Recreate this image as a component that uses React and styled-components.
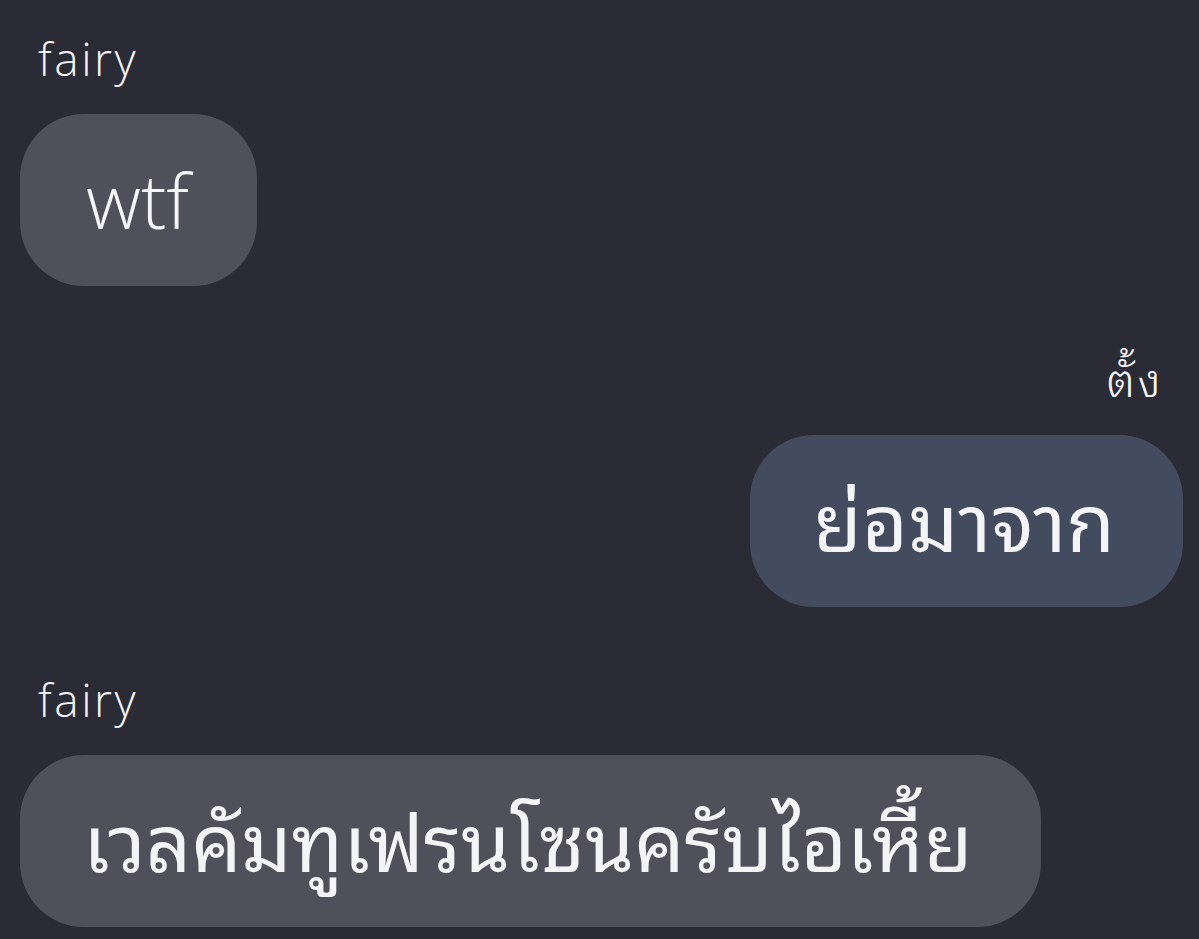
import React from "react"
import styled, { createGlobalStyle } from "styled-components"

const GlobalStyle = createGlobalStyle`
  html, body {
    margin: 0;
    padding: 0;
    background: #2a2b35;
  }
  body {
    font-family: "Open Sans", "Noto Sans Thai Looped", "Loma", "Garuda", "Kinnari", "Waree", "Noto Sans Thai", "Noto Sans", sans-serif;
    color: #f4f4f6;
  }
`

const Chat = styled.main`
  width: 1199px;
  height: 939px;
  overflow: hidden;
  box-sizing: border-box;
  padding: 28px 16px 0 20px;
  display: flex;
  flex-direction: column;
`

const Group = styled.section`
  display: flex;
  flex-direction: column;
  align-items: ${({ mine }) => (mine ? "flex-end" : "flex-start")};
  margin-bottom: ${({ gap }) => gap}px;
`

const Sender = styled.div`
  font-size: 46px;
  font-weight: 300;
  letter-spacing: 2.5px;
  line-height: 60px;
  padding: ${({ mine }) => (mine ? "0 20px 0 0" : "0 0 0 18px")};
  margin-bottom: 26px;
`

const Bubble = styled.div`
  box-sizing: border-box;
  height: 172px;
  display: flex;
  align-items: center;
  padding: 0 68px 0 ${({ thai }) => (thai ? 63 : 66)}px;
  border-radius: 64px;
  background: ${({ mine }) => (mine ? "#434c5f" : "#50505a")};
  font-size: ${({ thai }) => (thai ? 79 : 76)}px;
  font-weight: ${({ thai }) => (thai ? 400 : 300)};
  white-space: nowrap;
  line-height: 1;
`

const messages = [
  { id: 1, from: "fairy", text: "wtf", gap: 63 },
  { id: 2, from: "ตั้ง", text: "ย่อมาจาก", mine: true, thai: true, gap: 62 },
  { id: 3, from: "fairy", text: "เวลคัมทูเฟรนโซนครับไอเหี้ย", thai: true, gap: 0 },
]

export default function App() {
  return (
    <>
      <GlobalStyle />
      <Chat>
        {messages.map((m) => (
          <Group key={m.id} mine={m.mine} gap={m.gap}>
            <Sender mine={m.mine}>{m.from}</Sender>
            <Bubble mine={m.mine} thai={m.thai}>{m.text}</Bubble>
          </Group>
        ))}
      </Chat>
    </>
  )
}
